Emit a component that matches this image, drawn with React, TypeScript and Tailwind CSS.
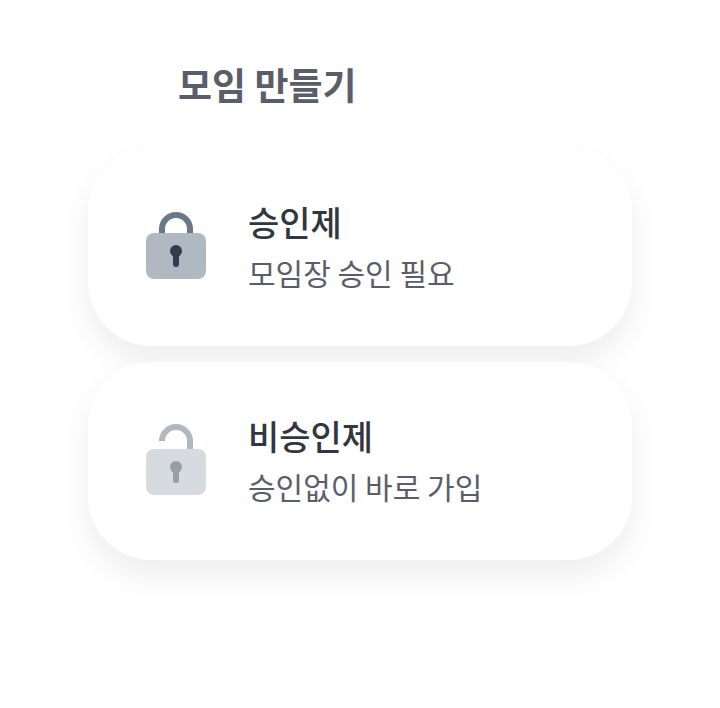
import type { ReactNode } from "react";

function LockIcon() {
  return (
    <svg width="60" height="74" viewBox="0 0 60 74" fill="none" aria-hidden="true" className="shrink-0">
      <path d="M16 27V19a14 14 0 0 1 28 0v8" stroke="#6B7886" strokeWidth="6" />
      <rect y="23" width="60" height="46" rx="8" fill="#B0B8C1" />
      <circle cx="30" cy="41" r="6" fill="#333D4D" />
      <path d="M30 42v12" stroke="#333D4D" strokeWidth="6" strokeLinecap="round" />
    </svg>
  );
}

function UnlockIcon() {
  return (
    <svg width="60" height="74" viewBox="0 0 60 74" fill="none" aria-hidden="true" className="shrink-0">
      <path d="M16 17a14 14 0 0 1 28 0v10" stroke="#B0B8C0" strokeWidth="6" />
      <rect y="25" width="60" height="46" rx="8" fill="#D7DADF" />
      <circle cx="30" cy="43" r="6" fill="#979EA6" />
      <path d="M30 44v12" stroke="#979EA6" strokeWidth="6" strokeLinecap="round" />
    </svg>
  );
}

type OptionCardProps = {
  icon: ReactNode;
  title: string;
  description: string;
};

function OptionCard({ icon, title, description }: OptionCardProps) {
  return (
    <button
      type="button"
      className="flex w-full items-center gap-[42px] rounded-[64px] bg-white px-[58px] py-12 text-left shadow-[0_16px_32px_rgba(0,0,0,0.07)]"
    >
      {icon}
      <span className="flex min-w-0 flex-col py-px">
        <span className="text-[34px] leading-[50px] font-medium text-[#313640]">{title}</span>
        <span className="text-[30px] leading-[50px] text-[#5A5E6B]">{description}</span>
      </span>
    </button>
  );
}

export default function App() {
  return (
    <main className="min-h-screen bg-white px-[88px] pt-[54px] pb-16 font-['Noto_Sans_CJK_KR',sans-serif]">
      <h1 className="pl-[90px] text-[37px] leading-[60px] font-bold text-[#5A5E6B]">모임 만들기</h1>
      <div className="mt-[34px] flex flex-col gap-4">
        <OptionCard icon={<LockIcon />} title="승인제" description="모임장 승인 필요" />
        <OptionCard icon={<UnlockIcon />} title="비승인제" description="승인없이 바로 가입" />
      </div>
    </main>
  );
}
